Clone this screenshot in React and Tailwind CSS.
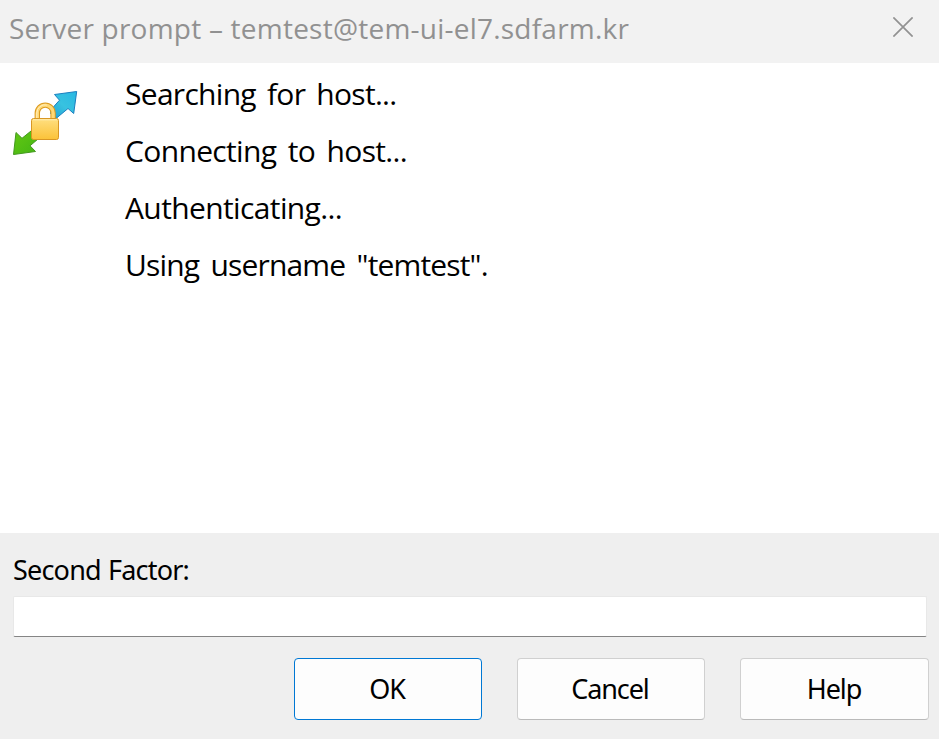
import React from "react";

const messages = [
  { text: "Searching for host...", style: "tracking-[-0.7px] [word-spacing:3.9px]" },
  { text: "Connecting to host...", style: "tracking-[-0.65px] [word-spacing:4.2px]" },
  { text: "Authenticating...", style: "tracking-[-0.62px]" },
  { text: 'Using username "temtest".', style: "tracking-[-0.85px] [word-spacing:4.4px]" },
];

function LockIcon() {
  return (
    <svg width="90" height="85" viewBox="0 0 90 85" className="block">
      <defs>
        <linearGradient id="blue" x1="1" y1="0" x2="0" y2="1">
          <stop offset="0" stopColor="#28b8e3" />
          <stop offset="0.5" stopColor="#38c2e0" />
          <stop offset="1" stopColor="#1c9bd3" />
        </linearGradient>
        <linearGradient id="green" x1="0" y1="0" x2="1" y2="1">
          <stop offset="0" stopColor="#63c813" />
          <stop offset="1" stopColor="#43b514" />
        </linearGradient>
        <linearGradient id="gold" x1="0" y1="0" x2="0" y2="1">
          <stop offset="0" stopColor="#ffdf80" />
          <stop offset="1" stopColor="#fbc238" />
        </linearGradient>
      </defs>
      <path d="M76.7 11.5 54.5 14.5 59.5 20.2 48.5 32.5 56 38.5 68 28.5 73.7 33.5Z" fill="url(#blue)" stroke="#1b7fc0" strokeWidth="1" />
      <path d="M13.5 74.5 16 52.5 22 58.3 31 51 38 59 30 65.8 35.5 71.5Z" fill="url(#green)" stroke="#43991f" strokeWidth="1" />
      <path d="M37.3 39V33a7.9 7.9 0 0 1 15.8 0v6Z" fill="#fff" />
      <path d="M50.5 31v3" stroke="#3a9bcb" strokeWidth="1" />
      <path d="M37.3 39V33a7.9 7.9 0 0 1 15.8 0v6" fill="none" stroke="#dc9a20" strokeWidth="5.4" />
      <path d="M37.3 39V33a7.9 7.9 0 0 1 15.8 0v6" fill="none" stroke="#ffd875" strokeWidth="3.4" />
      <path d="M36.8 38V33a8.2 8.2 0 0 1 10-8" fill="none" stroke="#fff0c0" strokeWidth="1" />
      <rect x="31.5" y="38.5" width="27" height="21" rx="2" fill="url(#gold)" stroke="#d99724" />
      <path d="M33 39.8H57" stroke="#ffedb2" />
    </svg>
  );
}

export default function App() {
  return (
    <div className="flex h-[739px] w-[939px] flex-col overflow-hidden bg-white font-['Noto_Sans',sans-serif] text-black">
      <header className="flex h-[63px] shrink-0 items-start justify-between bg-[#f2f2f2] pl-[9px] pr-[26px]">
        <h1 className="mt-[8px] whitespace-nowrap font-['Open_Sans',sans-serif] text-[28px] leading-[40px] tracking-[0.23px] text-[#919191]">
          Server prompt – temtest@tem-ui-el7.sdfarm.kr
        </h1>
        <button aria-label="Close" className="mt-[17px]">
          <svg width="20" height="20" viewBox="0 0 20 20" fill="none" stroke="#929292" strokeWidth="1.7">
            <path d="M.4.4 19.6 19.6M19.6.4.4 19.6" />
          </svg>
        </button>
      </header>
      <main className="flex h-[470px] shrink-0">
        <div className="w-[125px] shrink-0 pt-[17px]">
          <LockIcon />
        </div>
        <div className="pt-[2px] font-['Open_Sans',sans-serif] text-[30px] leading-[57px]">
          {messages.map((m) => (
            <p key={m.text} className="whitespace-nowrap">
              <span className={m.style}>{m.text}</span>
            </p>
          ))}
        </div>
      </main>
      <section className="flex flex-1 flex-col bg-[#efefef] pl-[13px]">
        <label htmlFor="factor" className="mt-[17px] text-[27px] leading-[40px] tracking-[-0.8px] [word-spacing:1px]">
          Second Factor:
        </label>
        <input id="factor" className="mt-[6px] h-[41px] w-[914px] rounded-[2px] border border-[#e8e8e8] border-b-[#858585] bg-white outline-none" />
        <div className="mt-[21px] flex gap-[35px] pl-[281px] text-[27px] tracking-[-1.1px]">
          <button className="h-[62px] w-[188px] rounded-[4px] border border-[#0078d4] bg-[#fdfdfd] pr-[2px]">OK</button>
          <button className="h-[62px] w-[188px] rounded-[4px] border border-[#d0d0d0] border-b-[#bababa] bg-[#fdfdfd] pr-[2px]">Cancel</button>
          <button className="h-[62px] w-[189px] rounded-[4px] border border-[#d0d0d0] border-b-[#bababa] bg-[#fdfdfd] pr-px">Help</button>
        </div>
      </section>
    </div>
  );
}
